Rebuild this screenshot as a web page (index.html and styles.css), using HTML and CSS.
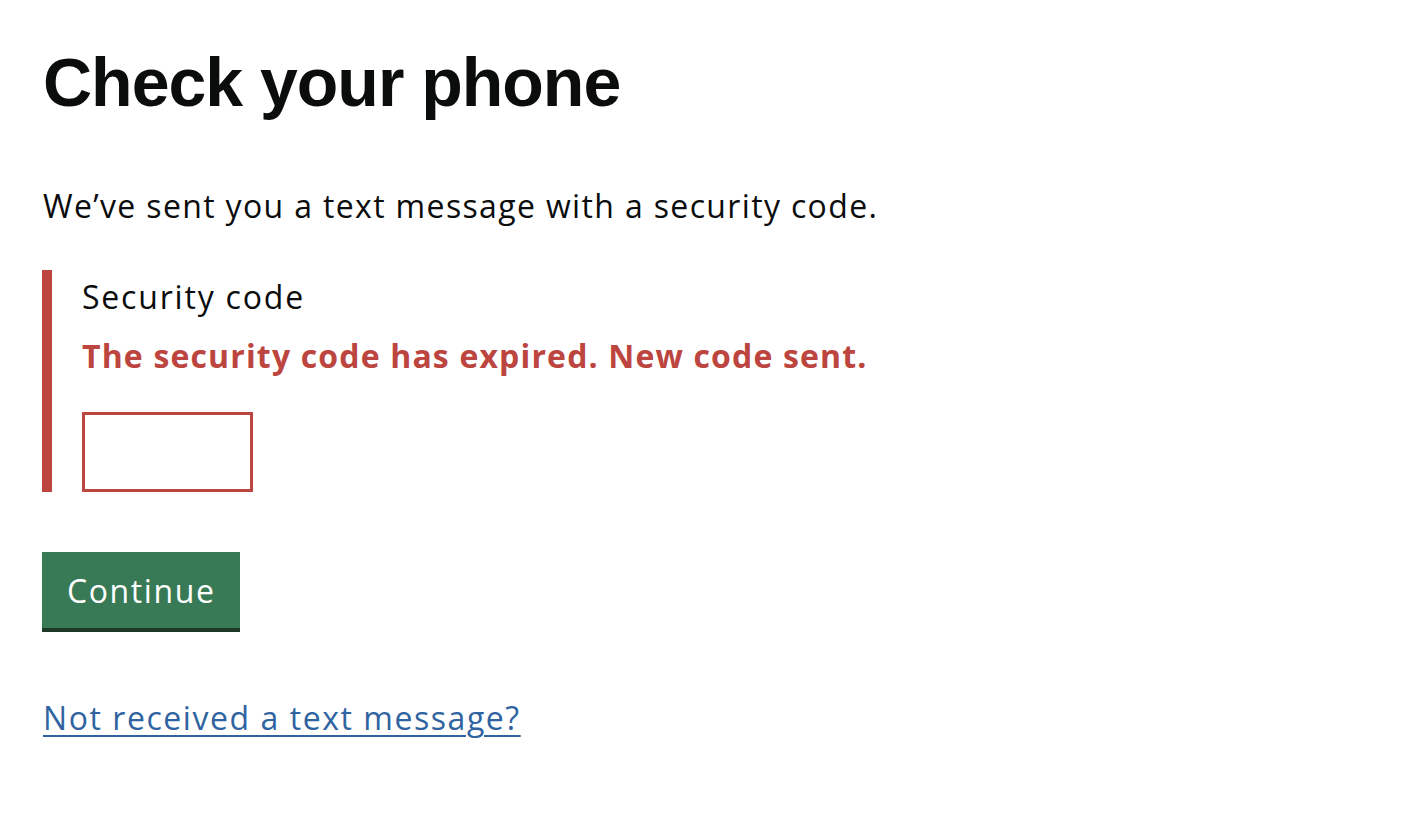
FILE: index.html
```html
<!DOCTYPE html>
<html lang="en">
<head>
<meta charset="utf-8">
<title>Check your phone</title>
<link rel="stylesheet" href="styles.css">
</head>
<body>
<main class="page">
  <h1 class="heading">Check your phone</h1>
  <p class="body-text">We’ve sent you a text message with a security code.</p>
  <form class="form">
    <div class="form-group form-group--error">
      <label class="label" for="code">Security code</label>
      <p class="error-message">The security code has expired. New code sent.</p>
      <input class="input input--error" id="code" type="text">
    </div>
    <button class="button" type="button">Continue</button>
  </form>
  <p class="link-row"><a class="link" href="#">Not received a text message?</a></p>
</main>
</body>
</html>
```

FILE: styles.css
```css
* { box-sizing: border-box; }
html, body { margin: 0; padding: 0; background: #ffffff; }
body {
  font-family: "Open Sans", "Noto Sans", sans-serif;
  color: #0b0c0c;
}
.page {
  padding: 0 42px;
  display: flex;
  flex-direction: column;
  align-items: flex-start;
}
.heading {
  font-family: "Liberation Sans", Arial, sans-serif;
  font-size: 68px;
  font-weight: 700;
  line-height: 1;
  letter-spacing: -1px;
  margin: 48px 0 0 1px;
}
.body-text {
  font-size: 32px;
  line-height: 40px;
  letter-spacing: 1.35px;
  margin: 70px 0 0 1px;
}
.form { display: flex; flex-direction: column; align-items: flex-start; margin-top: 44px; }
.form-group--error {
  border-left: 10px solid #bd4540;
  padding-left: 30px;
  display: flex;
  flex-direction: column;
  align-items: flex-start;
}
.label {
  font-size: 32px;
  line-height: 40px;
  letter-spacing: 1.8px;
  margin-top: 7px;
}
.error-message {
  color: #bd4540;
  font-weight: 700;
  font-size: 32px;
  line-height: 40px;
  letter-spacing: 1.15px;
  margin: 19px 0 0 0;
}
.input {
  width: 171px;
  height: 80px;
  margin-top: 36px;
  border: 3px solid #bd4540;
  background: #fff;
  font-size: 28px;
}
.button {
  margin-top: 60px;
  background: #387a56;
  color: #fff;
  border: 0;
  box-shadow: 0 4px 0 #1d3a29;
  font-family: inherit;
  font-size: 32px;
  letter-spacing: 1.6px;
  height: 76px;
  padding: 0 24px 0 25px;
  cursor: pointer;
}
.link-row { margin: 68px 0 0 1px; }
.link {
  color: #2f64a1;
  font-size: 32px;
  letter-spacing: 1.55px;
  text-decoration: underline;
  text-decoration-thickness: 2px;
  text-underline-offset: 5px;
}
```
